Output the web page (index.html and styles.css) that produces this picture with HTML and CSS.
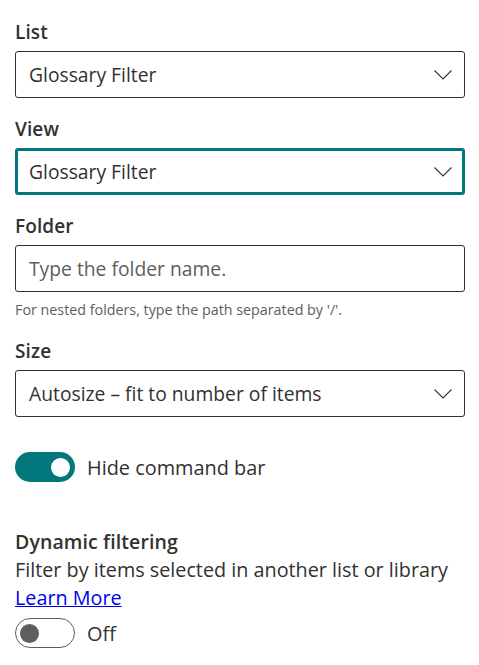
FILE: index.html
```html
<!DOCTYPE html>
<html>
<head>
<meta charset="utf-8">
<link rel="stylesheet" href="styles.css">
</head>
<body>
<div class="panel">
  <div class="field first">
    <div class="label">List</div>
    <div class="box dropdown"><span class="value">Glossary Filter</span>
      <svg class="chev" width="18" height="10" viewBox="0 0 18 10"><polyline points="0.5,0.5 9,9 17.5,0.5" fill="none" stroke="#323130" stroke-width="1.1"/></svg>
    </div>
  </div>
  <div class="field">
    <div class="label">View</div>
    <div class="box dropdown focused"><span class="value">Glossary Filter</span>
      <svg class="chev" width="18" height="10" viewBox="0 0 18 10"><polyline points="0.5,0.5 9,9 17.5,0.5" fill="none" stroke="#323130" stroke-width="1.1"/></svg>
    </div>
  </div>
  <div class="field">
    <div class="label">Folder</div>
    <div class="box"><span class="placeholder">Type the folder name.</span></div>
    <div class="help">For nested folders, type the path separated by '/'.</div>
  </div>
  <div class="field size">
    <div class="label">Size</div>
    <div class="box dropdown"><span class="value">Autosize – fit to number of items</span>
      <svg class="chev" width="18" height="10" viewBox="0 0 18 10"><polyline points="0.5,0.5 9,9 17.5,0.5" fill="none" stroke="#323130" stroke-width="1.1"/></svg>
    </div>
  </div>
  <div class="toggle-row hide">
    <span class="toggle on"><span class="knob"></span></span>
    <span class="toggle-text">Hide command bar</span>
  </div>
  <div class="dyn">
    <div class="label">Dynamic filtering</div>
    <div class="desc">Filter by items selected in another list or library</div>
    <a class="link" href="#">Learn More</a>
    <div class="toggle-row off-row">
      <span class="toggle off"><span class="knob"></span></span>
      <span class="toggle-text">Off</span>
    </div>
  </div>
</div>
</body>
</html>
```

FILE: styles.css
```css
* { box-sizing: border-box; }
html, body { margin: 0; padding: 0; background: #ffffff; }
body {
  font-family: "Segoe UI", "Open Sans", "Noto Sans", sans-serif;
  color: #323130;
  width: 479px;
  height: 665px;
  overflow: hidden;
}
.panel { padding: 20px 14px 0 15px; }
.field { display: flex; flex-direction: column; }
.field + .field { margin-top: 19px; }
.label {
  font-size: 19px;
  font-weight: 600;
  line-height: 24px;
  margin-bottom: 7px;
  color: #323130;
  letter-spacing: 0.1px;
}
.box {
  height: 47px;
  width: 450px;
  border: 1px solid #323130;
  border-radius: 3px;
  display: flex;
  align-items: center;
  padding: 0 12px 0 13px;
  font-size: 19.3px;
}
.box.focused { border: 3px solid #03787c; padding-left: 11px; padding-right: 10px; }
.value { flex: 1; color: #323130; white-space: nowrap; }
.placeholder { color: #605e5c; }
.chev { flex: none; margin-top: 1px; }
.help {
  font-size: 14.3px;
  color: #605e5c;
  line-height: 20px;
  margin-top: 8px;
}
.toggle-row { display: flex; align-items: center; }
.toggle-row.hide { margin-top: 35px; }
.toggle {
  width: 60px;
  height: 30px;
  border-radius: 15px;
  display: flex;
  align-items: center;
  flex: none;
}
.toggle.on { background: #03787c; justify-content: flex-end; padding-right: 5px; }
.toggle.on .knob { background: #ffffff; }
.toggle.off { border: 1px solid #605e5c; padding-left: 4px; }
.toggle.off .knob { background: #605e5c; }
.knob { width: 19px; height: 19px; border-radius: 50%; }
.toggle-text { margin-left: 12px; font-size: 19.9px; color: #323130; }
.dyn { margin-top: 48px; display: flex; flex-direction: column; align-items: flex-start; }
.dyn .label { margin-bottom: 2px; font-size: 19.5px; }
.desc { font-size: 19.8px; line-height: 28px; color: #323130; white-space: nowrap; }
.link { font-size: 19.8px; line-height: 28px; color: #0000ee; text-decoration: underline; }
.off-row { margin-top: 6px; }
```
